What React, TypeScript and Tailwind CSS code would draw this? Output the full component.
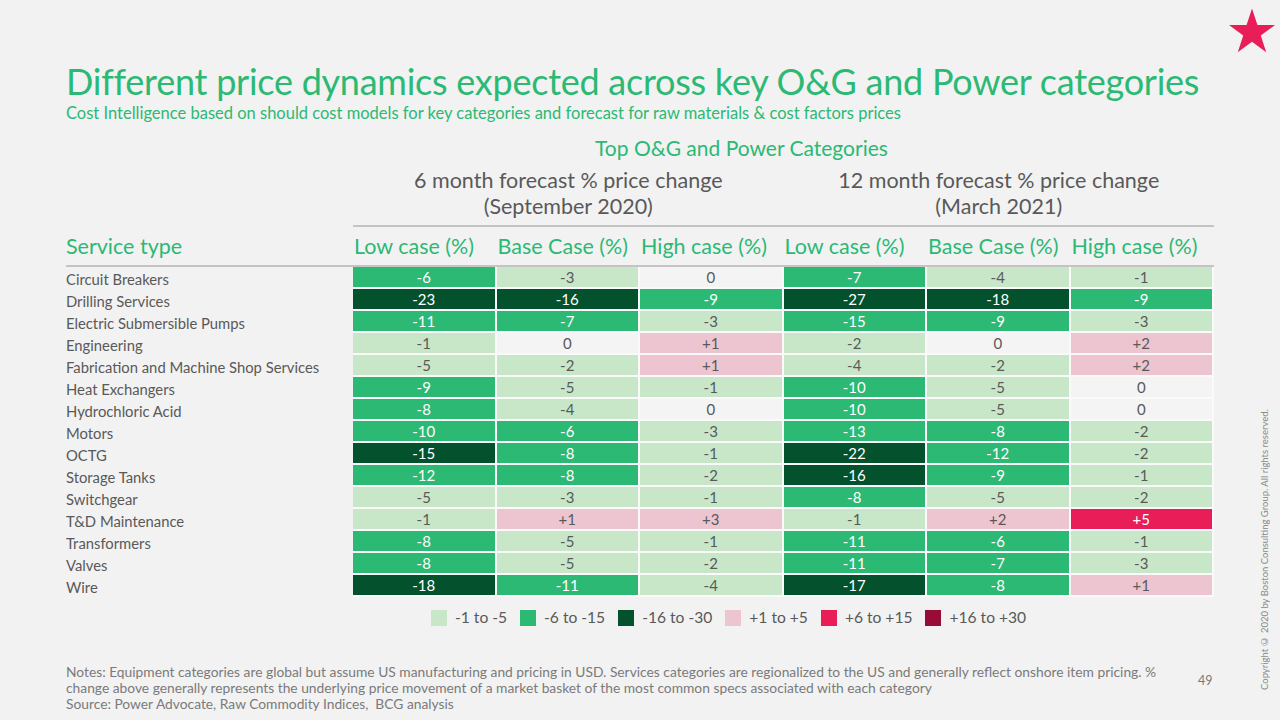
import React from "react";

type C = "L" | "M" | "D" | "P" | "H" | "R" | "Z";

const rows: [string, [string, C][]][] = [
  ["Circuit Breakers", [["-6", "M"], ["-3", "L"], ["0", "Z"], ["-7", "M"], ["-4", "L"], ["-1", "L"]]],
  ["Drilling Services", [["-23", "D"], ["-16", "D"], ["-9", "M"], ["-27", "D"], ["-18", "D"], ["-9", "M"]]],
  ["Electric Submersible Pumps", [["-11", "M"], ["-7", "M"], ["-3", "L"], ["-15", "M"], ["-9", "M"], ["-3", "L"]]],
  ["Engineering", [["-1", "L"], ["0", "Z"], ["+1", "P"], ["-2", "L"], ["0", "Z"], ["+2", "P"]]],
  ["Fabrication and Machine Shop Services", [["-5", "L"], ["-2", "L"], ["+1", "P"], ["-4", "L"], ["-2", "L"], ["+2", "P"]]],
  ["Heat Exchangers", [["-9", "M"], ["-5", "L"], ["-1", "L"], ["-10", "M"], ["-5", "L"], ["0", "Z"]]],
  ["Hydrochloric Acid", [["-8", "M"], ["-4", "L"], ["0", "Z"], ["-10", "M"], ["-5", "L"], ["0", "Z"]]],
  ["Motors", [["-10", "M"], ["-6", "M"], ["-3", "L"], ["-13", "M"], ["-8", "M"], ["-2", "L"]]],
  ["OCTG", [["-15", "D"], ["-8", "M"], ["-1", "L"], ["-22", "D"], ["-12", "M"], ["-2", "L"]]],
  ["Storage Tanks", [["-12", "M"], ["-8", "M"], ["-2", "L"], ["-16", "D"], ["-9", "M"], ["-1", "L"]]],
  ["Switchgear", [["-5", "L"], ["-3", "L"], ["-1", "L"], ["-8", "M"], ["-5", "L"], ["-2", "L"]]],
  ["T&D Maintenance", [["-1", "L"], ["+1", "P"], ["+3", "P"], ["-1", "L"], ["+2", "P"], ["+5", "H"]]],
  ["Transformers", [["-8", "M"], ["-5", "L"], ["-1", "L"], ["-11", "M"], ["-6", "M"], ["-1", "L"]]],
  ["Valves", [["-8", "M"], ["-5", "L"], ["-2", "L"], ["-11", "M"], ["-7", "M"], ["-3", "L"]]],
  ["Wire", [["-18", "D"], ["-11", "M"], ["-4", "L"], ["-17", "D"], ["-8", "M"], ["+1", "P"]]],
];

const cellCls: Record<C, string> = {
  L: "bg-[#c8e7c9] text-[#595959]",
  M: "bg-[#2bb974] text-white",
  D: "bg-[#03522d] text-white",
  P: "bg-[#ecc5d0] text-[#595959]",
  H: "bg-[#e91d58] text-white",
  R: "bg-[#970d35] text-white",
  Z: "bg-[#f4f4f4] text-[#595959]",
};

const legend: [string, string][] = [
  ["bg-[#c8e7c9]", "-1 to -5"],
  ["bg-[#2bb974]", "-6 to -15"],
  ["bg-[#03522d]", "-16 to -30"],
  ["bg-[#ecc5d0]", "+1 to +5"],
  ["bg-[#e91d58]", "+6 to +15"],
  ["bg-[#970d35]", "+16 to +30"],
];

const heads = ["Low case (%)", "Base Case (%)", "High case (%)", "Low case (%)", "Base Case (%)", "High case (%)"];

export default function App() {
  return (
    <div className="relative w-[1280px] h-[720px] overflow-hidden bg-[#f2f2f2] font-['Lato','Liberation_Sans',sans-serif] text-[#595959]">
      <svg className="absolute left-[1229px] top-[8px]" width="46" height="45" viewBox="0 0 100 96">
        <polygon points="50,0 61.8,36.3 100,36.3 69.1,58.8 80.9,95.1 50,72.6 19.1,95.1 30.9,58.8 0,36.3 38.2,36.3" fill="#e91d58" />
      </svg>

      <div className="pl-[66px] pt-[59px] w-[1214px]">
        <div className="text-[36px] leading-[44px] text-[#2bb974] whitespace-nowrap tracking-[-0.25px]">
          Different price dynamics expected across key O&amp;G and Power categories
        </div>
        <div className="mt-[2.5px] text-[16.5px] leading-[14px] text-[#2bb974] whitespace-nowrap">
          Cost Intelligence based on should cost models for key categories and forecast for raw materials &amp; cost factors prices
        </div>

        <div className="mt-[16.5px] pl-[529px] text-[21px] leading-[24px] text-[#2bb974] whitespace-nowrap">
          Top O&amp;G and Power Categories
        </div>

        <div className="mt-[7px] ml-[287px] flex border-b-2 border-[#c4c4c4] pb-[6px]">
          <div className="w-1/2 text-center text-[21.5px] leading-[26px] text-[#595959] whitespace-nowrap">
            6 month forecast % price change
            <br />
            (September 2020)
          </div>
          <div className="w-1/2 text-center text-[21.5px] leading-[26px] text-[#595959] whitespace-nowrap">
            12 month forecast % price change
            <br />
            (March 2021)
          </div>
        </div>

        <div className="flex h-[40px] items-center border-b-2 border-[#c4c4c4] text-[21.5px] text-[#2bb974] whitespace-nowrap">
          <div className="w-[287px]">Service type</div>
          {heads.map((h, i) => (
            <div key={i} className="w-[143.5px] pl-[1px]">
              {h}
            </div>
          ))}
        </div>

        <div className="flex flex-col">
          {rows.map(([name, cells]) => (
            <div key={name} className="flex h-[22px]">
              <div className="w-[287px] text-[14.8px] leading-[22px] pt-[1px] text-[#595959] whitespace-nowrap">{name}</div>
              {cells.map(([v, c], i) => (
                <div
                  key={i}
                  className={`w-[143.5px] border-b-2 border-r-2 border-[#fafafa] text-center text-[15px] leading-[20px] ${cellCls[c]}`}
                >
                  {v}
                </div>
              ))}
            </div>
          ))}
        </div>

        <div className="mt-[11px] flex items-center h-[20px] pl-[365px] text-[15.6px] text-[#595959]">
          {legend.map(([cls, label]) => (
            <div key={label} className="flex items-center mr-[13px]">
              <div className={`w-[16px] h-[16px] ${cls}`} />
              <span className="ml-[8px] whitespace-nowrap">{label}</span>
            </div>
          ))}
        </div>

        <div className="mt-[36px] text-[13.8px] leading-[16px] text-[#7a7a7a] whitespace-nowrap">
          Notes: Equipment categories are global but assume US manufacturing and pricing in USD. Services categories are regionalized to the US and generally reflect onshore item pricing. %
          <br />
          change above generally represents the underlying price movement of a market basket of the most common specs associated with each category
          <br />
          Source: Power Advocate, Raw Commodity Indices,&nbsp; BCG analysis
        </div>
      </div>

      <div className="absolute left-[1198px] top-[673px] text-[12.5px] leading-[16px] text-[#7a7a7a]">49</div>
      <div className="absolute left-[1259px] top-[410px] h-[280px] text-[9.5px] leading-[12px] text-[#8a8a8a] whitespace-nowrap [writing-mode:vertical-rl] rotate-180">
        Copyright © 2020 by Boston Consulting Group. All rights reserved.
      </div>
    </div>
  );
}
